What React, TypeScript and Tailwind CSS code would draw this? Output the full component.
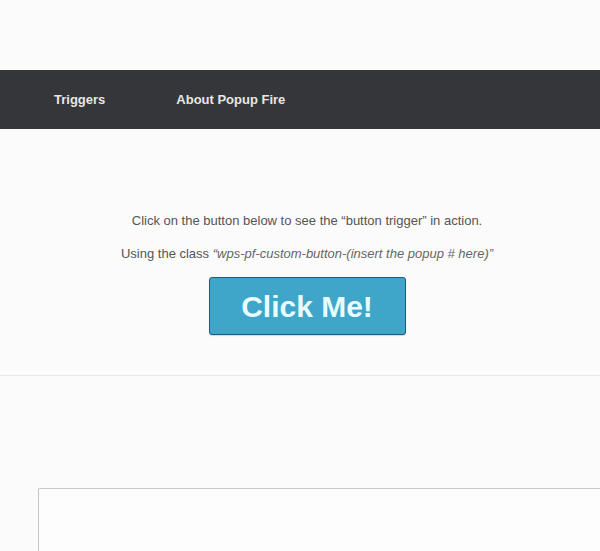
const App = () => {
  return (
    <div className="w-[600px] h-[551px] overflow-hidden bg-[#fbfbfb] font-['Liberation_Sans',Arial,sans-serif]">
      <div className="h-[70px]" />
      {/* nav */}
      <nav className="h-[59px] bg-[#35363a] flex items-center gap-[71px] pl-[54px]">
        <span className="text-[13px] font-bold text-[#e6e6e6]">Triggers</span>
        <span className="text-[13px] font-bold text-[#e6e6e6]">About Popup Fire</span>
      </nav>
      {/* trigger demo */}
      <section className="h-[247px] border-b border-[#e8e8e8] flex flex-col items-center pt-[83px] pl-[14px]">
        <p className="text-[13px] text-[#555] leading-[17px]">
          Click on the button below to see the “button trigger” in action.
        </p>
        <p className="text-[13px] text-[#555] leading-[17px] mt-[16px]">
          Using the class <em className="text-[#666]">“wps-pf-custom-button-(insert the popup # here)”</em>
        </p>
        <button
          type="button"
          className="mt-[15px] w-[197px] h-[58px] bg-[#3fa5c9] border border-[#1d5b7e] rounded-[3px] text-[30px] font-bold text-[#e8fdff] shadow-[0_1px_1px_rgba(0,0,0,0.15)]"
        >
          Click Me!
        </button>
      </section>
      <div className="pt-[112px] pl-[38px]">
        <div className="h-[80px] bg-[#fdfdfd] border-t border-l border-[#c8c8c8] rounded-tl-[2px]" />
      </div>
    </div>
  )
}

export default App
